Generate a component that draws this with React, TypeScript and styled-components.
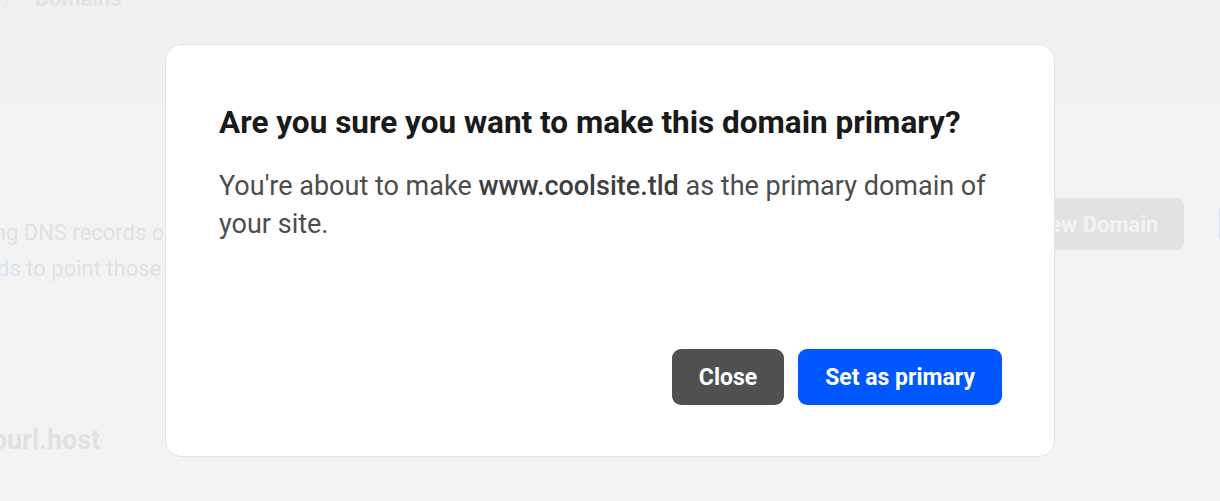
import React from 'react';
import styled, { createGlobalStyle } from 'styled-components';

const GlobalStyle = createGlobalStyle`
  html, body {
    margin: 0;
    padding: 0;
    background: #ffffff;
    font-family: Roboto, "Liberation Sans", Arial, sans-serif;
    overflow: hidden;
  }
  * { box-sizing: border-box; }
`;

const Page = styled.div`
  width: 1220px;
  height: 501px;
  overflow: hidden;
  background: #ffffff;
`;

const Header = styled.header`
  height: 106px;
  background: #e8e8e8;
  overflow: hidden;
`;

const Breadcrumb = styled.nav`
  display: flex;
  gap: 22px;
  margin: -16px 0 0 -200px;
  font-size: 22px;
  line-height: 30px;
  font-weight: 700;
  color: #5a5a5a;
`;

const Crumb = styled.span<{ $muted?: boolean }>`
  color: ${(p) => (p.$muted ? '#8a8a8a' : '#5a5a5a')};
  font-weight: ${(p) => (p.$muted ? 400 : 700)};
`;

const Section = styled.section`
  display: flex;
  justify-content: space-between;
  align-items: flex-start;
  padding: 92px 0 0 0;
  height: 280px;
  border-bottom: 1px solid #e2e2e2;
`;

const Intro = styled.p`
  margin: 17px 0 0 -241px;
  font-size: 22px;
  line-height: 36px;
  color: #444444;
  white-space: nowrap;
`;

const Link = styled.a`
  color: #0057ff;
  text-decoration: none;
`;

const Actions = styled.div`
  display: flex;
  align-items: center;
  gap: 35px;
  margin-right: -97px;
`;

const PageButton = styled.button<{ $variant: 'dark' | 'blue' }>`
  height: ${(p) => (p.$variant === 'dark' ? '52px' : '42px')};
  padding: 0 26px;
  border: none;
  border-radius: 8px;
  font-family: inherit;
  font-size: 22px;
  font-weight: 700;
  color: #ffffff;
  background: ${(p) => (p.$variant === 'dark' ? '#505050' : '#0057ff')};
`;

const DomainRow = styled.div`
  display: flex;
  align-items: center;
  height: 108px;
`;

const DomainName = styled.span`
  margin-left: -126px;
  font-size: 27px;
  font-weight: 700;
  color: #4a4a4a;
`;

const Backdrop = styled.div`
  position: fixed;
  inset: 0;
  background: rgba(242, 242, 242, 0.9);
  display: flex;
  justify-content: center;
  align-items: flex-start;
  padding-top: 44px;
`;

const Modal = styled.div`
  width: 890px;
  height: 413px;
  background: #ffffff;
  border: 1px solid #e4e4e4;
  border-radius: 16px;
  padding: 59px 52px 51px 53px;
  display: flex;
  flex-direction: column;
`;

const Title = styled.h2`
  margin: 0;
  font-size: 31.5px;
  line-height: 38px;
  font-weight: 700;
  color: #1a1a1a;
`;

const Body = styled.p`
  margin: 25px 0 0;
  font-size: 27px;
  line-height: 38px;
  color: #4d4d4d;
`;

const Strong = styled.strong`
  font-weight: 500;
  color: #3f3f3f;
`;

const Footer = styled.div`
  margin-top: auto;
  display: flex;
  justify-content: flex-end;
  gap: 14px;
`;

const ModalButton = styled.button<{ $primary?: boolean }>`
  height: 56px;
  padding: 0 27px;
  border: none;
  border-radius: 9px;
  font-family: inherit;
  font-size: 23px;
  font-weight: 700;
  color: #ffffff;
  background: ${(p) => (p.$primary ? '#0057ff' : '#505050')};
  cursor: pointer;
`;

export default function App() {
  return (
    <>
      <GlobalStyle />
      <Page>
        <Header>
          <Breadcrumb>
            <Crumb>Sites</Crumb>
            <Crumb $muted>/</Crumb>
            <Crumb>coolsite</Crumb>
            <Crumb $muted>/</Crumb>
            <Crumb>Domains</Crumb>
          </Breadcrumb>
        </Header>
        <Section>
          <Intro>
            Add a domain by changing DNS records on your provider.
            <br />
            Use these <Link href="#">required records</Link> to point those domains here.
          </Intro>
          <Actions>
            <PageButton $variant="dark">Add New Domain</PageButton>
            <PageButton $variant="blue">Help</PageButton>
          </Actions>
        </Section>
        <DomainRow>
          <DomainName>coolsite.yourl.host</DomainName>
        </DomainRow>
      </Page>
      <Backdrop>
        <Modal role="dialog" aria-modal="true">
          <Title>Are you sure you want to make this domain primary?</Title>
          <Body>
            You're about to make <Strong>www.coolsite.tld</Strong> as the primary domain of
            your site.
          </Body>
          <Footer>
            <ModalButton>Close</ModalButton>
            <ModalButton $primary>Set as primary</ModalButton>
          </Footer>
        </Modal>
      </Backdrop>
    </>
  );
}
